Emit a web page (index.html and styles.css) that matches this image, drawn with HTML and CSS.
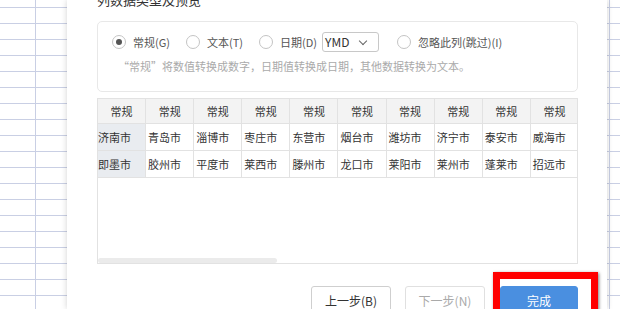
FILE: index.html
```html
<!DOCTYPE html>
<html lang="zh-CN">
<head>
    <meta charset="UTF-8">
    <meta name="viewport" content="width=device-width, initial-scale=1.0">
    <link rel="stylesheet" href="styles.css">
</head>
<body>
    <div class="page">
        <div class="sheet sheet-left"></div>

        <div class="dialog">
            <div class="title">列数据类型及预览</div>

            <div class="options">
                <div class="radio-row">
                    <label class="option"><span class="radio checked"></span>常规(G)</label>
                    <label class="option"><span class="radio"></span>文本(T)</label>
                    <label class="option"><span class="radio"></span>日期(D)</label>
                    <div class="select">YMD<span class="chevron"></span></div>
                    <label class="option last"><span class="radio"></span>忽略此列(跳过)(I)</label>
                </div>
                <p class="hint">“常规”将数值转换成数字，日期值转换成日期，其他数据转换为文本。</p>
            </div>

            <div class="preview">
                <table class="grid">
                    <tr class="head">
                        <th>常规</th><th>常规</th><th>常规</th><th>常规</th><th>常规</th>
                        <th>常规</th><th>常规</th><th>常规</th><th>常规</th><th>常规</th>
                    </tr>
                    <tr>
                        <td class="first">济南市</td><td>青岛市</td><td>淄博市</td><td>枣庄市</td><td>东营市</td>
                        <td>烟台市</td><td>潍坊市</td><td>济宁市</td><td>泰安市</td><td>威海市</td>
                    </tr>
                    <tr>
                        <td class="first">即墨市</td><td>胶州市</td><td>平度市</td><td>莱西市</td><td>滕州市</td>
                        <td>龙口市</td><td>莱阳市</td><td>莱州市</td><td>蓬莱市</td><td>招远市</td>
                    </tr>
                </table>
                <div class="scrollbar"></div>
            </div>

            <div class="footer">
                <button class="btn">上一步(B)</button>
                <button class="btn" disabled>下一步(N)</button>
                <button class="btn primary">完成</button>
                <span class="highlight"></span>
            </div>
        </div>

        <div class="sheet sheet-right"></div>
    </div>
</body>
</html>
```

FILE: styles.css
```css
body {
    margin: 0;
    width: 620px;
    height: 309px;
    overflow: hidden;
    background: #fff;
    font-family: "Noto Sans CJK SC", "Noto Sans", sans-serif;
}

.page {
    display: flex;
    height: 309px;
    overflow: hidden;
}

.sheet-left {
    width: 67px;
    flex: none;
    background-image:
        linear-gradient(to right, transparent 35px, #c9cfe4 35px, #c9cfe4 36px, transparent 36px),
        repeating-linear-gradient(to bottom, transparent 0, transparent 7px, #c9cfe4 7px, #c9cfe4 8px, transparent 8px, transparent 16px);
}

.sheet-right {
    flex: 1;
    background-image:
        linear-gradient(to right, transparent 2px, #c9cfe4 2px, #c9cfe4 3px, transparent 3px),
        repeating-linear-gradient(to bottom, transparent 0, transparent 7px, #c9cfe4 7px, #c9cfe4 8px, transparent 8px, transparent 16px);
}

.dialog {
    width: 481px;
    height: 309px;
    flex: none;
    padding: 0 29px 0 30px;
    background: #fff;
    box-shadow: 0 0 6px rgba(0, 0, 0, 0.18);
    position: relative;
    z-index: 1;
}

.title {
    font-size: 13px;
    color: #333;
    line-height: 16px;
    margin-top: -8px;
    height: 16px;
}

.options {
    margin-top: 13px;
    height: 71px;
    box-sizing: border-box;
    border: 1px solid #e8e8e8;
    border-radius: 5px;
    padding: 10px 0 0 14px;
}

.radio-row {
    display: flex;
    align-items: center;
    height: 20px;
    font-size: 11px;
    color: #555;
}

.option {
    display: flex;
    align-items: center;
    margin-right: 16px;
}

.option.last {
    margin-left: 18px;
}

.radio {
    width: 12px;
    height: 12px;
    border: 1px solid #c4c4c4;
    border-radius: 50%;
    margin-right: 7px;
    display: flex;
    align-items: center;
    justify-content: center;
}

.radio.checked::after {
    content: "";
    width: 6px;
    height: 6px;
    border-radius: 50%;
    background: #555;
}

.select {
    width: 57px;
    height: 20px;
    box-sizing: border-box;
    border: 1px solid #c8c8c8;
    border-radius: 3px;
    margin-left: -11px;
    padding-left: 2px;
    font-size: 12px;
    color: #333;
    line-height: 18px;
    position: relative;
}

.chevron {
    position: absolute;
    right: 12px;
    top: 5px;
    width: 5px;
    height: 5px;
    border-right: 1px solid #666;
    border-bottom: 1px solid #666;
    transform: rotate(45deg);
}

.hint {
    margin: 6px 0 0 6px;
    font-size: 11px;
    color: #aaa;
    line-height: 16px;
}

.preview {
    margin-top: 6px;
    height: 166px;
    box-sizing: border-box;
    border: 1px solid #e2e2e2;
    overflow: hidden;
    position: relative;
}

.grid {
    border-collapse: collapse;
    table-layout: fixed;
    width: 480px;
    font-size: 11px;
}

.grid th,
.grid td {
    border: 1px solid #e2e2e2;
    white-space: nowrap;
    overflow: hidden;
    color: #333;
}

.grid th {
    width: 47px;
    height: 24px;
    padding: 0;
    background: #f3f3f3;
    font-weight: normal;
    text-align: center;
    border-top: none;
}

.grid td {
    height: 26px;
    padding: 0 0 0 2px;
    background: #fff;
}

.grid tr th:first-child,
.grid tr td:first-child {
    border-left: none;
}

.grid tr th:last-child,
.grid tr td:last-child {
    border-right: none;
}

.grid td.first {
    padding-left: 0;
    background: #e9ecf0;
}

.scrollbar {
    position: absolute;
    left: 0;
    bottom: 0;
    width: 179px;
    height: 5px;
    border-radius: 3px;
    background: #ebebeb;
}

.footer {
    display: flex;
    justify-content: flex-end;
    gap: 14px;
    margin-top: 22px;
    position: relative;
}

.btn {
    width: 80px;
    height: 28px;
    box-sizing: border-box;
    border: 1px solid #cfcfcf;
    border-radius: 3px;
    background: #fff;
    font-family: inherit;
    font-size: 12px;
    color: #333;
    padding: 0;
}

.btn:disabled {
    color: #aaa;
    border-color: #e0e0e0;
}

.btn.primary {
    width: 78px;
    background: #4a8fe0;
    border-color: #4a8fe0;
    color: #fff;
    margin-left: 1px;
}

.highlight {
    position: absolute;
    left: 396px;
    top: -14px;
    width: 91px;
    height: 60px;
    border: 7px solid #ff0000;
    box-shadow: 1px 1px 3px rgba(0, 0, 0, 0.5);
}
```
